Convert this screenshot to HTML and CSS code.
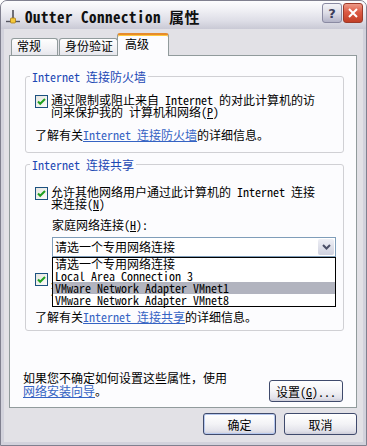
FILE: index.html
```html
<!DOCTYPE html>
<html lang="zh-CN">
<head>
    <meta charset="UTF-8">
    <meta name="viewport" content="width=device-width, initial-scale=1.0">
    <title>Outter Connection 属性</title>
    <link rel="stylesheet" href="styles.css">
</head>
<body>
<div class="window">
    <div class="titlebar">
        <svg class="title-icon" width="16" height="16" viewBox="0 0 16 16">
            <path d="M8 2v9" stroke="#3a3a44" stroke-width="1.4"/>
            <path d="M1 13.5h14" stroke="#55555f" stroke-width="1.4"/>
            <rect x="5.5" y="10" width="5" height="5" rx="1" fill="#f4c83a" stroke="#a87a14" stroke-width="0.8"/>
        </svg>
        <span class="title-text">Outter Connection 属性</span>
        <div class="caption-buttons">
            <span class="cap-btn help">?</span>
            <span class="cap-btn close">
                <svg width="10" height="10" viewBox="0 0 10 10"><path d="M1 1l8 8M9 1l-8 8" stroke="#fff" stroke-width="2"/></svg>
            </span>
        </div>
    </div>

    <div class="dialog">
        <div class="tabs">
            <div class="tab">常规</div>
            <div class="tab">身份验证</div>
            <div class="tab active">高级</div>
        </div>

        <div class="panel">
            <fieldset class="group first">
                <legend>Internet 连接防火墙</legend>
                <div class="check-row">
                    <span class="checkbox"><svg width="11" height="11" viewBox="0 0 11 11"><path d="M2 5.5l2.2 2.3L9 3" fill="none" stroke="#21a121" stroke-width="2"/></svg></span>
                    <div class="check-label">通过限制或阻止来自 Internet 的对此计算机的访<br>问来保护我的 计算机和网络(<u>P</u>)</div>
                </div>
                <p class="info">了解有关<a href="#">Internet 连接防火墙</a>的详细信息。</p>
            </fieldset>

            <fieldset class="group second">
                <legend>Internet 连接共享</legend>
                <div class="check-row">
                    <span class="checkbox"><svg width="11" height="11" viewBox="0 0 11 11"><path d="M2 5.5l2.2 2.3L9 3" fill="none" stroke="#21a121" stroke-width="2"/></svg></span>
                    <div class="check-label">允许其他网络用户通过此计算机的 Internet 连接<br>来连接(<u>N</u>)</div>
                </div>
                <div class="field-label">家庭网络连接(<u>H</u>):</div>
                <div class="combo">
                    <span class="combo-value">请选一个专用网络连接</span>
                    <span class="combo-arrow"><svg width="9" height="6" viewBox="0 0 9 6"><path d="M1 1l3.5 3.5L8 1" fill="none" stroke="#4a4e66" stroke-width="2"/></svg></span>
                    <ul class="combo-list">
                        <li>请选一个专用网络连接</li>
                        <li>Local Area Connection 3</li>
                        <li class="selected">VMware Network Adapter VMnet1</li>
                        <li>VMware Network Adapter VMnet8</li>
                    </ul>
                </div>
                <div class="check-row lower">
                    <span class="checkbox"><svg width="11" height="11" viewBox="0 0 11 11"><path d="M2 5.5l2.2 2.3L9 3" fill="none" stroke="#21a121" stroke-width="2"/></svg></span>
                    <div class="check-label">允许其他网络用户控制或禁用共享的 Internet<br>连接(<u>O</u>)</div>
                </div>
                <p class="info lower">了解有关<a href="#">Internet 连接共享</a>的详细信息。</p>
            </fieldset>

            <div class="footer">
                <p class="footer-text">如果您不确定如何设置这些属性，使用<br><a href="#">网络安装向导</a>。</p>
                <button class="btn settings">设置(<u>G</u>)...</button>
            </div>
        </div>

        <div class="actions">
            <button class="btn default">确定</button>
            <button class="btn">取消</button>
        </div>
    </div>
</div>
</body>
</html>
```

FILE: styles.css
```css
* {
    box-sizing: border-box;
}

body {
    margin: 0;
    font-family: "Noto Sans Mono CJK SC", "Noto Sans CJK SC", monospace;
    font-size: 12px;
    color: #000;
}

/* window frame */
.window {
    width: 367px;
    height: 446px;
    display: flex;
    flex-direction: column;
    border: 1px solid #80808f;
    border-radius: 7px 7px 0 0;
    background: #d2d2dc;
    padding: 0 3px 3px;
}

.titlebar {
    height: 28px;
    margin: 0 -3px;
    padding: 0 3px 0 4px;
    display: flex;
    align-items: center;
    border-radius: 6px 6px 0 0;
    background: linear-gradient(#fdfdfe, #efeff4 35%, #dedee7 70%, #c9c9d5);
}

.title-icon {
    flex: none;
    margin-top: 2px;
}

.title-text {
    margin-left: 4px;
    margin-top: 2px;
    font-size: 15px;
    font-weight: bold;
    letter-spacing: 0.5px;
    color: #111;
}

.caption-buttons {
    margin-left: auto;
    align-self: flex-start;
    margin-top: 2px;
    display: flex;
    gap: 1px;
}

.cap-btn {
    width: 20px;
    height: 20px;
    display: flex;
    align-items: center;
    justify-content: center;
    border-radius: 3px;
}

.cap-btn.help {
    border: 1px solid #8a8aa2;
    background: linear-gradient(#f4f4f8, #dcdce6 50%, #b4b4c8);
    color: #3c3c5a;
    font-family: "DejaVu Sans", sans-serif;
    font-weight: bold;
    font-size: 13px;
}

.cap-btn.close {
    border: 1px solid #9c3a2a;
    background: linear-gradient(#ee9a88, #dc5a44 45%, #c23e26);
}

/* dialog body */
.dialog {
    flex: 1;
    background: #e2e1e6;
    padding: 4px 6px 0 5px;
    display: flex;
    flex-direction: column;
}

.tabs {
    display: flex;
    align-items: flex-end;
    height: 23px;
    padding-left: 2px;
    margin-bottom: -1px;
    position: relative;
    z-index: 1;
}

.tab {
    height: 17px;
    min-width: 47px;
    margin: 0 1px 1px 0;
    padding: 0 4px 0 5px;
    line-height: 14px;
    border: 1px solid #919b9c;
    border-bottom: none;
    border-radius: 3px 3px 0 0;
    background: linear-gradient(#fefefe, #f2f2f5 60%, #e6e6ec);
}

.tab.active {
    height: 23px;
    min-width: 52px;
    margin: 0 0 0 -2px;
    padding: 2px 4px 0 7px;
    border-top: 2px solid #e68b2c;
    box-shadow: inset 0 1px #ffc83c;
    background: #fcfcfe;
}

.panel {
    background: #fcfcfe;
    border: 1px solid #919b9c;
    padding: 0 12px 5px 15px;
}

/* group boxes */
.group {
    margin: 0;
    border: 1px solid #d0d0d4;
    border-radius: 3px;
    min-inline-size: 0;
}

.group.first {
    margin-top: 14px;
    padding: 11px 7px 11px 9px;
}

.group.second {
    margin-top: 5px;
    padding: 15px 7px 7px 9px;
}

.group legend {
    margin-left: -5px;
    padding: 0 2px;
    line-height: 13px;
    color: #1c48b4;
}

.check-row {
    display: flex;
    gap: 3px;
}

.check-row.lower {
    margin-top: 15px;
}

.checkbox {
    flex: none;
    width: 13px;
    height: 13px;
    margin-top: 1px;
    display: flex;
    align-items: center;
    justify-content: center;
    border: 1px solid #1c5180;
    background: linear-gradient(135deg, #e6e6e0, #fbfbf9);
}

.check-label {
    line-height: 12px;
}

.info {
    margin: 11px 0 0;
    line-height: 12px;
}

.info.lower {
    margin-top: 15px;
}

a {
    color: #3563c3;
    text-decoration: underline;
}

.field-label {
    margin: 9px 0 0 17px;
    line-height: 12px;
}

/* open combo box */
.combo {
    position: relative;
    height: 20px;
    margin: 6px 0 0 17px;
    display: flex;
    border: 1px solid #7f9db9;
    background: #fff;
}

.combo-value {
    flex: 1;
    padding-left: 2px;
    line-height: 17px;
}

.combo-arrow {
    width: 16px;
    margin: 1px;
    display: flex;
    align-items: center;
    justify-content: center;
    border-radius: 2px;
    background: linear-gradient(#eeeff5, #cfd1df);
}

.combo-list {
    position: absolute;
    top: calc(100% + 1px);
    left: -1px;
    right: -1px;
    z-index: 2;
    margin: 0;
    padding: 0;
    list-style: none;
    border: 1px solid #000;
    background: #fff;
}

.combo-list li {
    height: 12px;
    line-height: 12px;
    padding-left: 2px;
}

.combo-list li.selected {
    background: #b2b4bf;
}

/* bottom of panel */
.footer {
    margin: 40px 1px 0 -2px;
    display: flex;
    align-items: flex-end;
    justify-content: space-between;
}

.footer-text {
    margin: 0 0 5px;
    line-height: 13px;
}

.btn {
    width: 73px;
    height: 22px;
    padding: 0;
    font: inherit;
    color: #000;
    border: 1px solid #3f4a6c;
    border-radius: 3px;
    background: linear-gradient(#ffffff, #f3f3f6 50%, #e2e2ea 85%, #cdcdd9);
}

.btn.settings {
    width: 74px;
}

.btn.default {
    box-shadow: inset 0 0 0 1px #b6c8ee;
}

.actions {
    margin-top: 5px;
    display: flex;
    justify-content: flex-end;
    gap: 8px;
}
```
